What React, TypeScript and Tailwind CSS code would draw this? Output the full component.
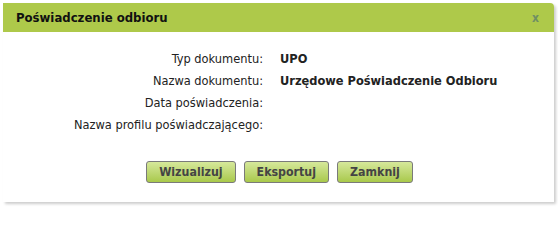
export default function App() {
  const rows: [string, string][] = [
    ['Typ dokumentu:', 'UPO'],
    ['Nazwa dokumentu:', 'Urzędowe Poświadczenie Odbioru'],
    ['Data poświadczenia:', ''],
    ['Nazwa profilu poświadczającego:', ''],
  ];

  return (
    <div
      className="w-[558px] h-[208px] bg-white p-[3px] text-[#222]"
      style={{ fontFamily: 'Tahoma, "DejaVu Sans Condensed", "DejaVu Sans", sans-serif' }}
    >
      <div className="w-[551px] h-[199px] flex flex-col bg-white rounded-tr-[4px] shadow-[2px_2px_3px_rgba(0,0,0,0.2)]">
        <div className="h-[29px] shrink-0 flex items-center justify-between bg-[#aec94a] rounded-tr-[4px] pl-[13px] pr-[15px]">
          <span className="text-[13px] font-bold text-[#111]">Poświadczenie odbioru</span>
          <span className="text-[12px] font-bold text-[#6f8f64] leading-none">x</span>
        </div>
        <div className="flex-1 flex flex-col pt-[16px]">
          <div className="grid grid-cols-[260px_1fr] gap-x-[17px]">
            {rows.map(([label, value]) => (
              <div key={label} className="contents">
                <div className="h-[22px] flex items-center justify-end text-[12.7px]">{label}</div>
                <div className="h-[22px] flex items-center text-[12.7px] font-bold">{value}</div>
              </div>
            ))}
          </div>
          <div className="flex justify-center gap-[8px] mt-[25px] pl-[2px]">
            {['Wizualizuj', 'Eksportuj', 'Zamknij'].map((b) => (
              <button
                key={b}
                className="h-[22px] px-[12px] rounded-[3px] border border-[#7a7a7a] bg-gradient-to-b from-[#d6e89a] to-[#a9c94a] text-[12.3px] font-bold text-[#444]"
              >
                {b}
              </button>
            ))}
          </div>
        </div>
      </div>
    </div>
  );
}
